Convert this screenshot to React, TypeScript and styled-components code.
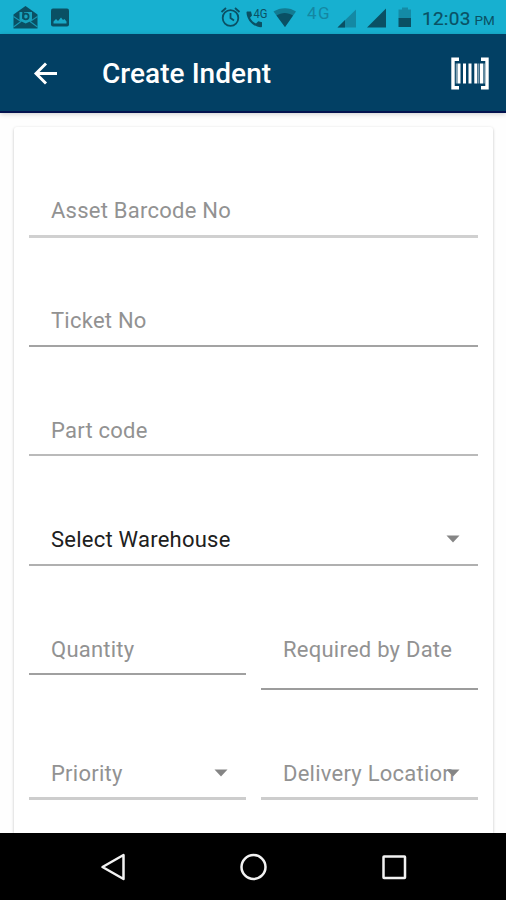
import React from 'react';
import styled, { createGlobalStyle } from 'styled-components';

const GlobalStyle = createGlobalStyle`
  * { box-sizing: border-box; }
  body { margin: 0; background: #fff; font-family: Roboto, sans-serif; }
`;

const Screen = styled.div`
  display: flex;
  flex-direction: column;
  width: 506px;
  height: 900px;
  overflow: hidden;
  background: #fefefe;
`;

const StatusBar = styled.div`
  display: flex;
  flex: none;
  height: 34px;
  background: #17b0d0;
  color: #0a5064;
`;

const StatusIcon = styled.svg<{ $gap: number }>`
  display: block;
  flex: none;
  height: 34px;
  margin-left: ${(p) => p.$gap}px;
`;

const NetworkLabel = styled.span`
  width: 26px;
  margin-left: 10px;
  font-size: 17px;
  line-height: 27px;
  letter-spacing: 1.5px;
  color: #1487a2;
`;

const Clock = styled.span`
  margin-left: 10px;
  font-size: 19px;
  font-weight: 400;
  line-height: 37px;
  letter-spacing: 0.25px;
  white-space: nowrap;
  -webkit-text-stroke: 0.2px;
`;

const Meridiem = styled.small`
  margin-left: 4px;
  font-size: 13.5px;
  letter-spacing: -0.2px;
  -webkit-text-stroke: 0;
`;

const AppBar = styled.header`
  display: flex;
  flex: none;
  align-items: center;
  height: 79px;
  padding: 1px 16px 0 33px;
  background: #024064;
  border-bottom: 2px solid #03134f;
  box-shadow: 0 1px 5px rgba(0, 0, 0, 0.2);
  color: #fff;
`;

const BarIcon = styled.svg`
  display: block;
  flex: none;
`;

const Title = styled.h1`
  flex: 1;
  margin: 0 0 0 44px;
  padding-top: 2px;
  font-size: 28px;
  font-weight: 500;
  line-height: 36px;
  letter-spacing: 0.05px;
`;

const Content = styled.main`
  flex: 1;
  min-height: 0;
  padding: 14px 13px 0 14px;
`;

const Card = styled.form`
  height: 100%;
  padding: 0 15px;
  background: #fff;
  border-radius: 3px 3px 0 0;
  box-shadow: 0 1px 3px rgba(0, 0, 0, 0.25);
`;

const Row = styled.div`
  display: grid;
  grid-template-columns: 1fr 1fr;
  align-items: start;
  gap: 15px;
`;

const Field = styled.div<{ $top: number; $bottom?: number; $line: string; $weight?: number; $ink?: string }>`
  display: flex;
  align-items: center;
  justify-content: space-between;
  padding: ${(p) => p.$top}px 18px ${(p) => p.$bottom ?? 9}px 22px;
  border-bottom: ${(p) => p.$weight ?? 2}px solid ${(p) => p.$line};
  color: ${(p) => p.$ink ?? '#929292'};
`;

const Label = styled.span`
  font-size: 22px;
  line-height: 30px;
  letter-spacing: 0.24px;
  white-space: nowrap;
`;

const Caret = styled.svg<{ $overlap?: boolean }>`
  flex: none;
  width: 14px;
  height: 8px;
  margin-left: ${(p) => (p.$overlap ? '-20px' : '0')};
  margin-bottom: 2px;
  fill: #858585;
`;

const NavBar = styled.nav`
  display: flex;
  flex: none;
  align-items: center;
  justify-content: space-between;
  height: 67px;
  padding: 0 97px 0 98px;
  background: #000;
`;

const NavIcon = styled.svg`
  width: 30px;
  height: 30px;
  fill: none;
  stroke: #f2f2f2;
  stroke-width: 2.5;
  stroke-linejoin: round;
`;

const DropCaret = ({ overlap }: { overlap?: boolean }) => (
  <Caret viewBox="0 0 14 8" $overlap={overlap}>
    <path d="M0.5 0.5h13L7 7.5z" />
  </Caret>
);

export default function App() {
  return (
    <>
      <GlobalStyle />
      <Screen>
        <StatusBar>
          <StatusIcon $gap={13} width="26" viewBox="0 0 26 34">
            <path d="M0.500 14.500 12.500 6 24.500 14.500V28.500H.5z" fill="currentColor" />
            <path d="M6.500 12h12.500v8.500l-6.300 3-6.200-3z" fill="#18a3be" />
            <path d="m0.500 16.500 7.500 5-7.500 5.500M24.500 16.500l-7.500 5 7.500 5.500" fill="none" stroke="#1798b3" strokeWidth="1.100" />
            <path d="M10.300 11v8" stroke="currentColor" strokeWidth="2" />
            <circle cx="12.800" cy="16.500" r="2.800" fill="none" stroke="currentColor" strokeWidth="1.800" />
          </StatusIcon>
          <StatusIcon $gap={11} width="20" viewBox="0 0 20 34">
            <rect x="1" y="8.500" width="18" height="18" rx="2" fill="currentColor" />
            <path d="M3.500 23.500v-2l2.500-2.500 2 2 3-3.500 2 2.500 1.500-1 2 2.500v2z" fill="#18a9c7" />
          </StatusIcon>
          <StatusIcon $gap={150} width="22" viewBox="0 0 22 34">
            <g fill="none" stroke="currentColor" strokeWidth="1.800">
              <circle cx="10.500" cy="18" r="7.800" />
              <path d="M10.500 13v5l3.500 2.500M1.500 12l4.500-4M19.500 12 15 8" />
            </g>
          </StatusIcon>
          <StatusIcon $gap={4} width="24" viewBox="0 0 24 34">
            <path d="M1.500 11.500h3.500l1 4-2 2.200c1.300 2.600 3.300 4.600 6 5.800l2.300-2.300 3.700 1v4c0 .7-.5 1-1.200 1C7.500 27 1 20.500.5 12.700c0-.7.3-1.200 1-1.200z" fill="currentColor" />
            <text x="7.500" y="17.500" fontSize="12" textLength="14" lengthAdjust="spacingAndGlyphs" fontFamily="Roboto" fill="currentColor">4G</text>
          </StatusIcon>
          <StatusIcon $gap={3} width="24" viewBox="0 0 24 34">
            <path d="M0.500 11.500C7 7 17 7 23 11.500L12 27z" fill="#127b92" />
            <path d="M3.500 15.500c5-3.500 11.500-3.500 16.500 0L12 27z" fill="currentColor" />
          </StatusIcon>
          <NetworkLabel>4G</NetworkLabel>
          <StatusIcon $gap={4} width="20" viewBox="0 0 20 34">
            <path d="M0.500 27.500 19 9.500v18z" fill="#1489a4" />
            <path d="M0.500 27.500 8 20v7.500z" fill="currentColor" />
          </StatusIcon>
          <StatusIcon $gap={10} width="20" viewBox="0 0 20 34">
            <path d="M0 27.500 19 8.500v19z" fill="currentColor" />
          </StatusIcon>
          <StatusIcon $gap={11} width="14" viewBox="0 0 14 34">
            <path d="M0.500 9.500H4v-2h6v2h3v9H.5z" fill="#148ba6" />
            <path d="M0.500 18H13v9H.5z" fill="currentColor" />
          </StatusIcon>
          <Clock>12:03<Meridiem>PM</Meridiem></Clock>
        </StatusBar>

        <AppBar>
          <BarIcon width="25" height="26" viewBox="0 0 25 26">
            <path d="M24 13.500H3M13 3.500 3 13.500l10 10" fill="none" stroke="currentColor" strokeWidth="2.900" />
          </BarIcon>
          <Title>Create Indent</Title>
          <BarIcon width="40" height="34" viewBox="0 0 40 34">
            <path d="M9 3.200H3v28.600h6M31 3.200h6v28.600h-6" fill="none" stroke="currentColor" strokeWidth="3.400" />
            <path d="M9 7.500v20M14.500 7.500v20M20 7.500v20M25.800 7.500v20M31.500 7.500v20" stroke="currentColor" strokeWidth="3" />
            <path d="M6.500 7.500v20M28.700 7.500v20M34 7.500v20" stroke="currentColor" strokeWidth="1.500" opacity=".5" />
          </BarIcon>
        </AppBar>

        <Content>
          <Card>
            <Field $top={69} $weight={3} $line="#d0d0d0"><Label>Asset Barcode No</Label></Field>
            <Field $top={68} $line="#a3a3a3"><Label>Ticket No</Label></Field>
            <Field $top={69} $bottom={8} $line="#bababa"><Label>Part code</Label></Field>
            <Field $top={69} $line="#b0b0b0" $ink="#202020">
              <Label>Select Warehouse</Label>
              <DropCaret />
            </Field>
            <Row>
              <Field $top={69} $bottom={8} $line="#a0a0a0"><Label>Quantity</Label></Field>
              <Field $top={69} $bottom={23} $line="#9c9c9c"><Label>Required by Date</Label></Field>
            </Row>
            <Row>
              <Field $top={69} $bottom={8} $weight={3} $line="#cdcdcd">
                <Label>Priority</Label>
                <DropCaret />
              </Field>
              <Field $top={69} $bottom={8} $weight={3} $line="#cdcdcd">
                <Label>Delivery Location</Label>
                <DropCaret overlap />
              </Field>
            </Row>
          </Card>
        </Content>

        <NavBar>
          <NavIcon viewBox="0 0 30 30"><path d="M25.500 3v24L4.500 15z" /></NavIcon>
          <NavIcon viewBox="0 0 30 30"><circle cx="14.500" cy="15" r="12" /></NavIcon>
          <NavIcon viewBox="0 0 30 30"><rect x="4.500" y="4.500" width="21.500" height="21.500" rx="0.500" /></NavIcon>
        </NavBar>
      </Screen>
    </>
  );
}
